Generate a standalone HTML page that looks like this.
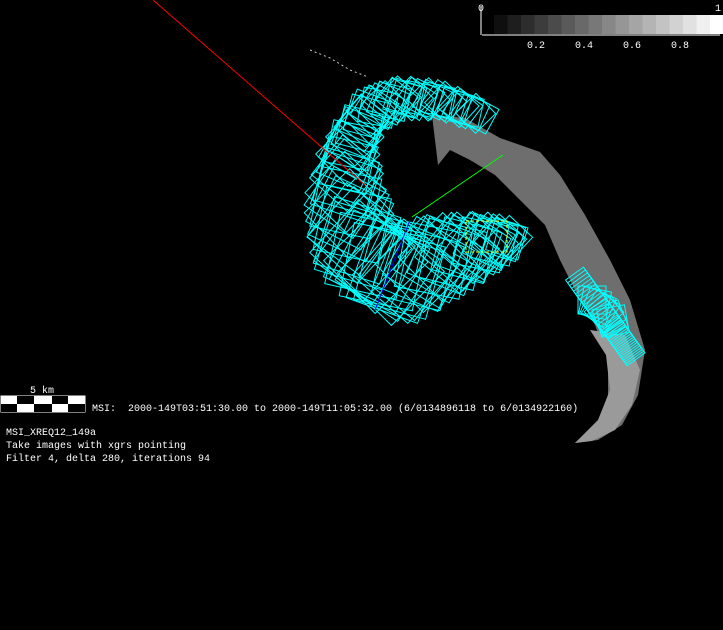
<!DOCTYPE html>
<html><head><style>
html,body{margin:0;padding:0;background:#000;width:723px;height:630px;overflow:hidden}
svg{display:block}
text{font-family:"Liberation Mono",monospace;font-size:10px;fill:#fff}
</style></head><body>
<svg id="s" width="723" height="630" viewBox="0 0 723 630">
<rect width="723" height="630" fill="#000"/>
<path d="M432,115 L465,118 L500,138 L540,152 L560,175 L585,215 L610,260 L630,300 L645,350 L638,395 L622,425 L598,440 L575,443 L598,422 L608,395 L608,360 L595,325 L575,290 L560,260 L545,225 L520,200 L495,175 L470,160 L450,150 L438,165 L435,140 Z" fill="#6e6e6e"/>
<path d="M590,330 L625,335 L640,370 L632,405 L615,430 L592,441 L575,443 L598,420 L610,390 L606,355 Z" fill="#9a9a9a"/>
<g id="sq" fill="none" stroke="#0ff" stroke-width="1"></g>
<line x1="153" y1="0" x2="365" y2="185" stroke="#f00"/>
<line x1="412" y1="217" x2="503" y2="155" stroke="#0f0"/>
<line x1="410" y1="220" x2="375" y2="310" stroke="#00f"/>
<rect x="466" y="221" width="41" height="31" fill="none" stroke="#ff0" stroke-dasharray="3,2"/>
<path d="M310,50 L330,58 L350,70 L368,77" stroke="#ccc" fill="none" stroke-dasharray="2,3"/>
<g id="cb"></g>
<line x1="481" y1="6" x2="481" y2="35" stroke="#fff"/>
<line x1="482" y1="35" x2="720" y2="35" stroke="#fff"/>
<text x="478" y="11">0</text><text x="715" y="11">1</text>
<text x="527" y="48">0.2</text><text x="575" y="48">0.4</text><text x="623" y="48">0.6</text><text x="671" y="48">0.8</text>
<text x="30" y="393">5 km</text>
<rect x="0.5" y="395.5" width="85" height="17" fill="#fff"/>
<rect x="17" y="396" width="17" height="8" fill="#000"/>
<rect x="52" y="396" width="16" height="8" fill="#000"/>
<rect x="1" y="404" width="16" height="8" fill="#000"/>
<rect x="34" y="404" width="18" height="8" fill="#000"/>
<rect x="68" y="404" width="17" height="8" fill="#000"/>
<text x="92" y="411" xml:space="preserve">MSI:  2000-149T03:51:30.00 to 2000-149T11:05:32.00 (6/0134896118 to 6/0134922160)</text>
<text x="6" y="435">MSI_XREQ12_149a</text>
<text x="6" y="448">Take images with xgrs pointing</text>
<text x="6" y="461">Filter 4, delta 280, iterations 94</text>
</svg>
<script>
var ns="http://www.w3.org/2000/svg",g=document.getElementById("sq");
function sq(cx,cy,w,h,a){var c=Math.cos(a),s=Math.sin(a),p=[],pts=[[-w,-h],[w,-h],[w,h],[-w,h]];
for(var i=0;i<4;i++){var x=pts[i][0],y=pts[i][1];p.push((cx+x*c-y*s).toFixed(1)+","+(cy+x*s+y*c).toFixed(1));}
var e=document.createElementNS(ns,"polygon");e.setAttribute("points",p.join(" "));g.appendChild(e);}
var K=[[480,115,14],[440,100,15],[400,98,16],[368,112,18],[348,150,22],[345,200,30],[360,250,36],[395,275,38],[440,258,32],[480,245,24],[510,238,16]];
var N=94;
for(var i=0;i<N;i++){var u=i/(N-1)*(K.length-1),k=Math.min(Math.floor(u),K.length-2),f=u-k;
var a=K[k],b=K[k+1],cx=a[0]+(b[0]-a[0])*f,cy=a[1]+(b[1]-a[1])*f,s=a[2]+(b[2]-a[2])*f;
sq(cx,cy,s,s,0.5+0.3*Math.sin(i*1.7));}
for(var i=0;i<22;i++){var f=i/22;sq(592+36*f,298+50*f,30-14*f,11,0.95);}
for(var i=0;i<8;i++){sq(592+i*3,300+i*3,14,14,i*0.2);}
var cb=document.getElementById("cb");
for(var i=0;i<17;i++){var v=Math.round(15+i*240/16),r=document.createElementNS(ns,"rect");
r.setAttribute("x",494+i*13.5);r.setAttribute("y",15);r.setAttribute("width",14);r.setAttribute("height",19);
r.setAttribute("fill","rgb("+v+","+v+","+v+")");cb.appendChild(r);}
</script>
</body></html>
